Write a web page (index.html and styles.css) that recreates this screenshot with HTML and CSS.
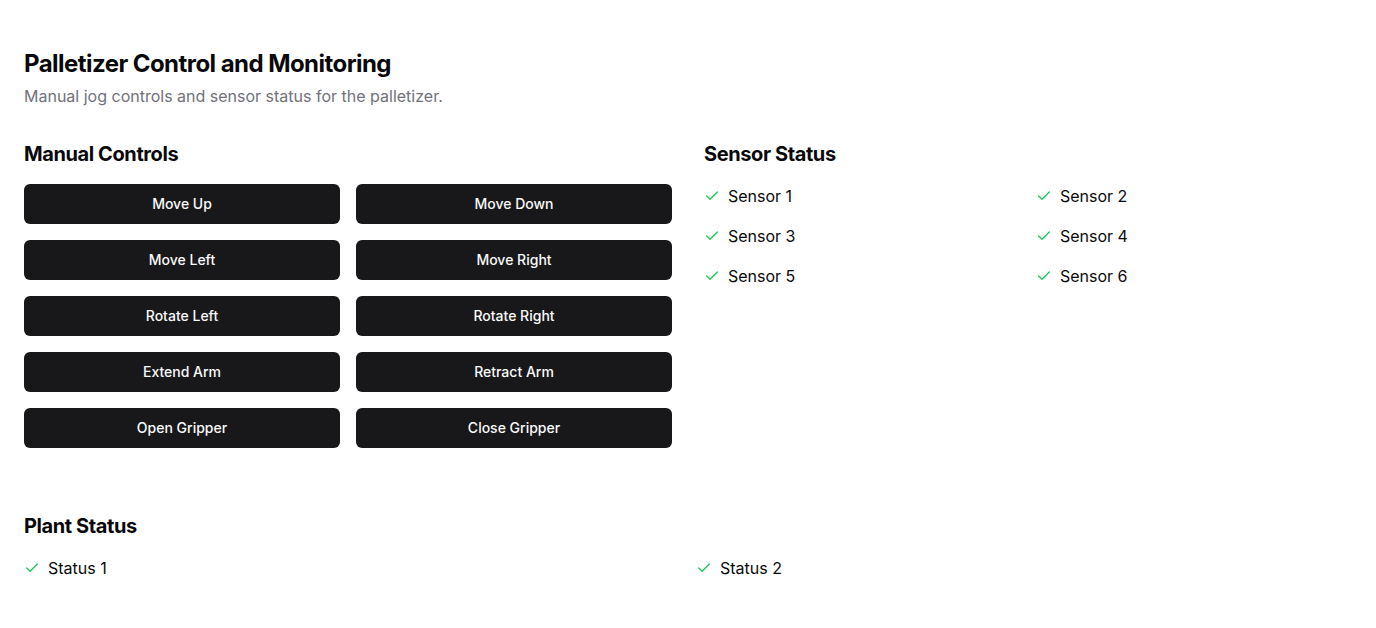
FILE: index.html
```html
<!DOCTYPE html>
<html lang="en">
<head>
<meta charset="utf-8">
<title>Palletizer Control and Monitoring</title>
<link rel="stylesheet" href="styles.css">
</head>
<body>
<main class="page">
  <header class="header">
    <h1 class="title">Palletizer Control and Monitoring</h1>
    <p class="subtitle">Manual jog controls and sensor status for the palletizer.</p>
  </header>
  <div class="main-grid">
    <section class="panel">
      <h2 class="section-title">Manual Controls</h2>
      <div class="button-grid">
        <button class="btn">Move Up</button>
        <button class="btn">Move Down</button>
        <button class="btn">Move Left</button>
        <button class="btn">Move Right</button>
        <button class="btn">Rotate Left</button>
        <button class="btn">Rotate Right</button>
        <button class="btn">Extend Arm</button>
        <button class="btn">Retract Arm</button>
        <button class="btn">Open Gripper</button>
        <button class="btn">Close Gripper</button>
      </div>
    </section>
    <section class="panel">
      <h2 class="section-title">Sensor Status</h2>
      <ul class="status-grid">
        <li class="status"><svg class="check" viewBox="0 0 24 24"><path d="M20 6 9 17l-5-5"/></svg><span>Sensor 1</span></li>
        <li class="status"><svg class="check" viewBox="0 0 24 24"><path d="M20 6 9 17l-5-5"/></svg><span>Sensor 2</span></li>
        <li class="status"><svg class="check" viewBox="0 0 24 24"><path d="M20 6 9 17l-5-5"/></svg><span>Sensor 3</span></li>
        <li class="status"><svg class="check" viewBox="0 0 24 24"><path d="M20 6 9 17l-5-5"/></svg><span>Sensor 4</span></li>
        <li class="status"><svg class="check" viewBox="0 0 24 24"><path d="M20 6 9 17l-5-5"/></svg><span>Sensor 5</span></li>
        <li class="status"><svg class="check" viewBox="0 0 24 24"><path d="M20 6 9 17l-5-5"/></svg><span>Sensor 6</span></li>
      </ul>
    </section>
  </div>
  <section class="plant">
    <h2 class="section-title">Plant Status</h2>
    <ul class="status-grid">
      <li class="status"><svg class="check" viewBox="0 0 24 24"><path d="M20 6 9 17l-5-5"/></svg><span>Status 1</span></li>
      <li class="status"><svg class="check" viewBox="0 0 24 24"><path d="M20 6 9 17l-5-5"/></svg><span>Status 2</span></li>
    </ul>
  </section>
</main>
</body>
</html>
```

FILE: styles.css
```css
* { box-sizing: border-box; }
html, body { margin: 0; padding: 0; background: #ffffff; }
body {
  font-family: Inter, "Noto Sans", sans-serif;
  color: #09090b;
}
.page {
  padding: 48px 24px 24px;
}
.header { margin-bottom: 32px; }
.title {
  margin: 0;
  font-size: 24px;
  line-height: 32px;
  font-weight: 700;
  letter-spacing: -0.55px;
}
.subtitle {
  margin: 4px 0 0;
  font-size: 16px;
  line-height: 24px;
  color: #71717a;
}
.main-grid {
  display: grid;
  grid-template-columns: 1fr 1fr;
  gap: 32px;
}
.section-title {
  margin: 0 0 16px;
  font-size: 20px;
  line-height: 28px;
  font-weight: 700;
  letter-spacing: -0.4px;
}
.button-grid {
  display: grid;
  grid-template-columns: 1fr 1fr;
  gap: 16px;
}
.btn {
  height: 40px;
  padding: 0 16px 1px;
  border: 0;
  border-radius: 6px;
  background: #18181b;
  color: #fafafa;
  font-family: inherit;
  font-size: 14px;
  line-height: 20px;
  font-weight: 500;
  cursor: pointer;
}
.status-grid {
  list-style: none;
  margin: 0;
  padding: 0;
  display: grid;
  grid-template-columns: 1fr 1fr;
  gap: 16px;
}
.status {
  display: flex;
  align-items: center;
  gap: 8px;
  font-size: 16px;
  line-height: 24px;
}
.check {
  width: 16px;
  height: 16px;
  flex: none;
  fill: none;
  stroke: #22c55e;
  stroke-width: 2;
  stroke-linecap: round;
  stroke-linejoin: round;
}
.plant { margin-top: 64px; }
```
